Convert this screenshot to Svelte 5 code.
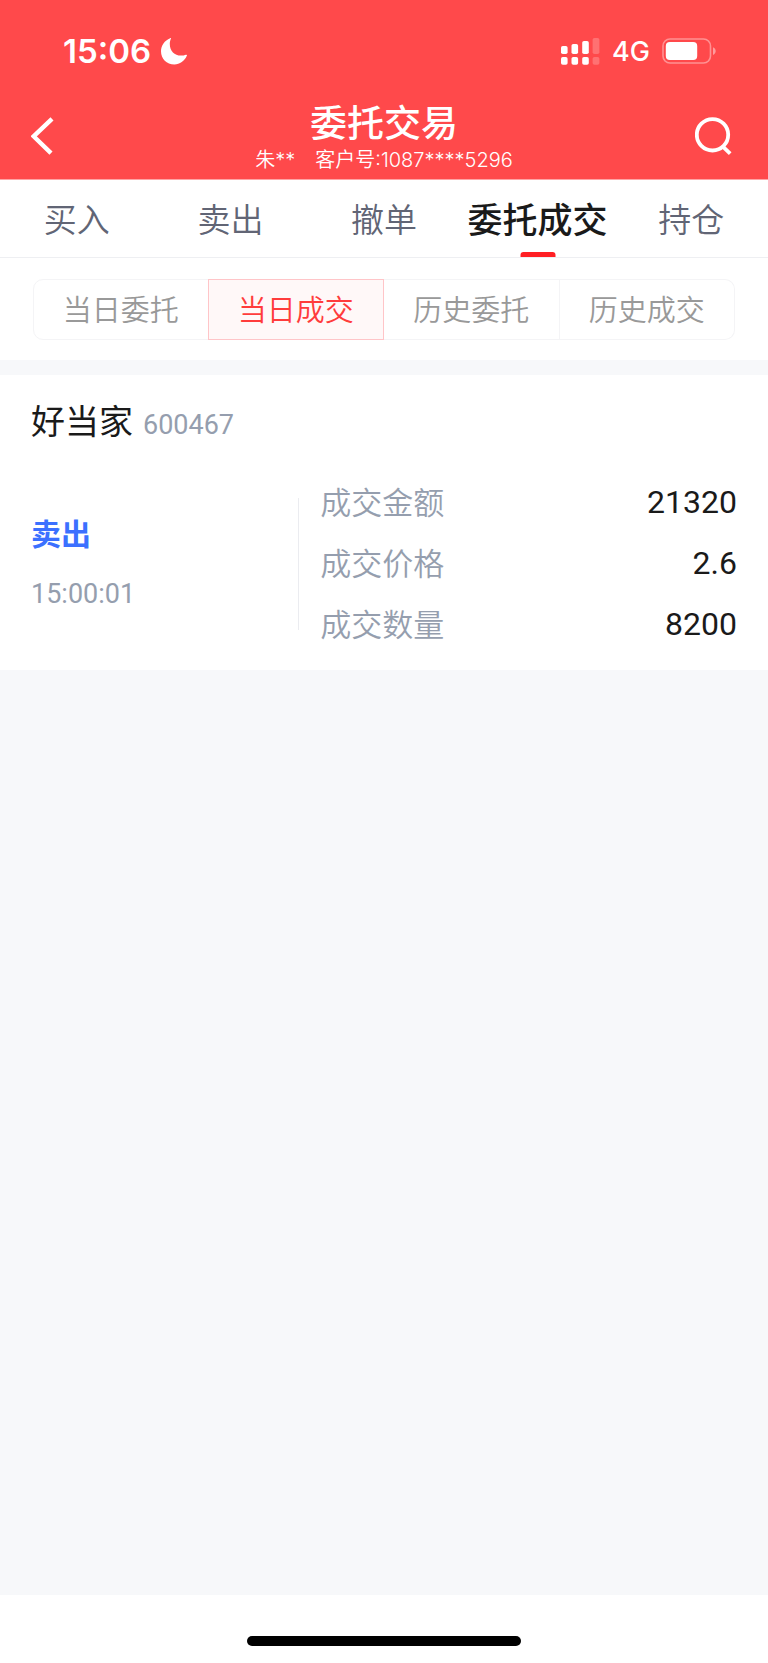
<script>
  const tabs = ['买入', '卖出', '撤单', '委托成交', '持仓'];
  const ranges = ['当日委托', '当日成交', '历史委托', '历史成交'];
  const details = [
    ['成交金额', '21320'],
    ['成交价格', '2.6'],
    ['成交数量', '8200']
  ];
  let activeTab = $state(3);
  let activeRange = $state(1);
</script>

<div class="screen">
  <header>
    <div class="status">
      <div class="clock">
        <span>15:06</span>
        <svg width="26" height="27" viewBox="0 0 26 27" aria-hidden="true">
          <path d="M10 0.6C9.2 2.4 8.8 4 8.8 6C8.8 13 13.5 17.6 20 17.6C22 17.6 23.6 17.2 25 16.7C26 16.5 26.2 17 25.8 17.8C23.6 23.2 18.8 26.4 13.4 26.4C5.6 26.4 0 20.8 0 13.2C0 7.6 3.6 2.4 9.2 0.2C9.8 0 10.2 0.2 10 0.6Z" fill="#fff" />
        </svg>
      </div>
      <div class="signals">
        <svg width="39" height="28" viewBox="0 0 39 28" fill="#fff" aria-hidden="true">
          <rect x="0" y="9" width="6.6" height="8" rx="1.8" />
          <rect x="10.5" y="7" width="6.6" height="10" rx="1.8" />
          <rect x="21.2" y="4" width="6.6" height="13" rx="1.8" />
          <rect x="31.6" y="1" width="6.8" height="16" rx="1.8" opacity=".22" />
          <rect x="0" y="20" width="6.6" height="7.8" rx="1.8" />
          <rect x="10.5" y="20" width="6.6" height="7.8" rx="1.8" />
          <rect x="21.2" y="20" width="6.6" height="7.8" rx="1.8" />
          <rect x="31.6" y="20" width="6.8" height="7.8" rx="1.8" opacity=".22" />
        </svg>
        <span>4G</span>
        <svg width="54" height="26" viewBox="0 0 54 26" aria-hidden="true">
          <rect x="1" y="1" width="47.5" height="24" rx="7" fill="none" stroke="#fff" stroke-opacity=".4" stroke-width="1.6" />
          <rect x="3.8" y="4" width="31.4" height="18" rx="4" fill="#fff" />
          <path d="M51 9.2C54.6 10.6 54.6 15.6 51 17Z" fill="#fff" fill-opacity=".45" />
        </svg>
      </div>
    </div>
    <div class="bar">
      <button aria-label="返回">
        <svg width="42" height="38" viewBox="0 0 42 38" aria-hidden="true">
          <path d="M21 1.8L2.6 19.3L20 36.2" fill="none" stroke="#fff" stroke-width="4.4" />
        </svg>
      </button>
      <div class="heading">
        <h1>委托交易</h1>
        <p><span>朱**</span><span>客户号:1087****5296</span></p>
      </div>
      <button aria-label="搜索">
        <svg width="42" height="38" viewBox="0 0 42 38" fill="none" stroke="#fff" aria-hidden="true">
          <circle cx="17.5" cy="17.8" r="15.7" stroke-width="3.8" />
          <path d="M27.6 29.3L35.2 36.6" stroke-width="3.8" />
        </svg>
      </button>
    </div>
  </header>

  <nav>
    {#each tabs as tab, i}
      <button class:active={i === activeTab} onclick={() => (activeTab = i)}>{tab}</button>
    {/each}
  </nav>

  <div class="filter">
    <div class="segments">
      {#each ranges as range, i}
        <button class:active={i === activeRange} onclick={() => (activeRange = i)}>{range}</button>
      {/each}
    </div>
  </div>

  <main>
    <article>
      <h2>好当家 <span>600467</span></h2>
      <div class="deal">
        <div class="side">
          <strong>卖出</strong>
          <time>15:00:01</time>
        </div>
        <dl>
          {#each details as [label, value]}
            <div><dt>{label}</dt><dd>{value}</dd></div>
          {/each}
        </dl>
      </div>
    </article>
  </main>

  <footer><div class="home"></div></footer>
</div>

<style>
  :global(body) {
    margin: 0;
  }
  .screen {
    min-height: 100vh;
    display: flex;
    flex-direction: column;
    background: #f7f8fa;
    color: #1a1a1a;
    font-family: Inter, 'Noto Sans CJK SC', sans-serif;
  }
  button {
    padding: 0;
    border: 0;
    background: none;
    color: inherit;
    font: inherit;
    cursor: pointer;
  }
  svg {
    display: block;
  }
  h1, h2, p, dl, dd {
    margin: 0;
  }
  header {
    background: #ff494b;
    color: #fff;
  }
  .status {
    display: flex;
    justify-content: space-between;
    align-items: center;
    height: 102px;
    padding: 0 52px 0 63px;
  }
  .clock, .signals {
    display: flex;
    align-items: center;
  }
  .clock {
    gap: 10px;
    font-size: 33px;
    font-weight: 600;
  }
  .signals {
    gap: 12px;
    font-size: 27px;
    font-weight: 500;
  }
  .bar {
    display: flex;
    justify-content: space-between;
    align-items: center;
    height: 77px;
    padding: 0 31px;
    border-bottom: 1px solid #ffa4a5;
  }
  .bar button {
    display: flex;
    padding-bottom: 10px;
  }
  .heading {
    text-align: center;
    padding-bottom: 6px;
  }
  h1 {
    font-size: 37px;
    line-height: 44px;
    font-weight: 500;
  }
  .heading p {
    display: flex;
    justify-content: center;
    gap: 20px;
    font-size: 20px;
    line-height: 28px;
    font-weight: 350;
  }
  nav {
    display: grid;
    grid-template-columns: repeat(5, 1fr);
    height: 77px;
    border-bottom: 1px solid #eeeff2;
    background: #fff;
  }
  nav button {
    position: relative;
    padding-bottom: 2px;
    color: #616575;
    font-size: 33px;
    font-weight: 350;
    white-space: nowrap;
  }
  nav .active {
    color: #1a1a1a;
    font-size: 35px;
    font-weight: 500;
  }
  nav .active::after {
    content: '';
    position: absolute;
    left: 50%;
    bottom: 0;
    width: 35px;
    height: 5px;
    transform: translateX(-50%);
    border-radius: 3px 3px 0 0;
    background: #ff1f24;
  }
  .filter {
    padding: 21px 33px 20px;
    background: #fff;
  }
  .segments {
    display: grid;
    grid-template-columns: repeat(4, 1fr);
  }
  .segments button {
    height: 61px;
    padding-bottom: 4px;
    border: 1px solid #f4f4f6;
    border-left-width: 0;
    color: #999;
    font-size: 29px;
    font-weight: 350;
  }
  .segments button:first-child {
    border-left-width: 1px;
    border-radius: 10px 0 0 10px;
  }
  .segments button:last-child {
    border-radius: 0 10px 10px 0;
  }
  .segments button.active {
    margin-left: -1px;
    border: 1px solid #ffc5c8;
    background: #fff8f8;
    color: #ff3c3c;
  }
  main {
    flex: 1;
    padding-top: 15px;
  }
  article {
    padding: 22px 31px 15px;
    background: #fff;
  }
  h2 {
    display: flex;
    align-items: baseline;
    gap: 10px;
    font-size: 34px;
    line-height: 50px;
    font-weight: 400;
  }
  h2 span, time, dd {
    font-family: Roboto, sans-serif;
  }
  h2 span, time {
    color: #959eae;
    font-size: 27px;
  }
  .deal {
    display: flex;
    align-items: center;
    padding-top: 22px;
  }
  .side {
    display: flex;
    flex-direction: column;
    justify-content: center;
    gap: 20px;
    box-sizing: border-box;
    width: 38%;
    height: 132px;
    border-right: 1px solid #ebecf0;
  }
  strong {
    color: #3b70ff;
    font-size: 30px;
    line-height: 40px;
    font-weight: 700;
  }
  time {
    line-height: 40px;
  }
  dl {
    flex: 1;
    padding-left: 21px;
  }
  dl div {
    display: flex;
    justify-content: space-between;
    line-height: 61px;
  }
  dt {
    color: #959eae;
    font-size: 31px;
    font-weight: 350;
  }
  dd {
    font-size: 32px;
  }
  footer {
    display: flex;
    justify-content: center;
    align-items: flex-end;
    box-sizing: border-box;
    height: 68px;
    padding-bottom: 17px;
    background: #fff;
  }
  .home {
    width: 274px;
    height: 10px;
    border-radius: 5px;
    background: #000;
  }
</style>
